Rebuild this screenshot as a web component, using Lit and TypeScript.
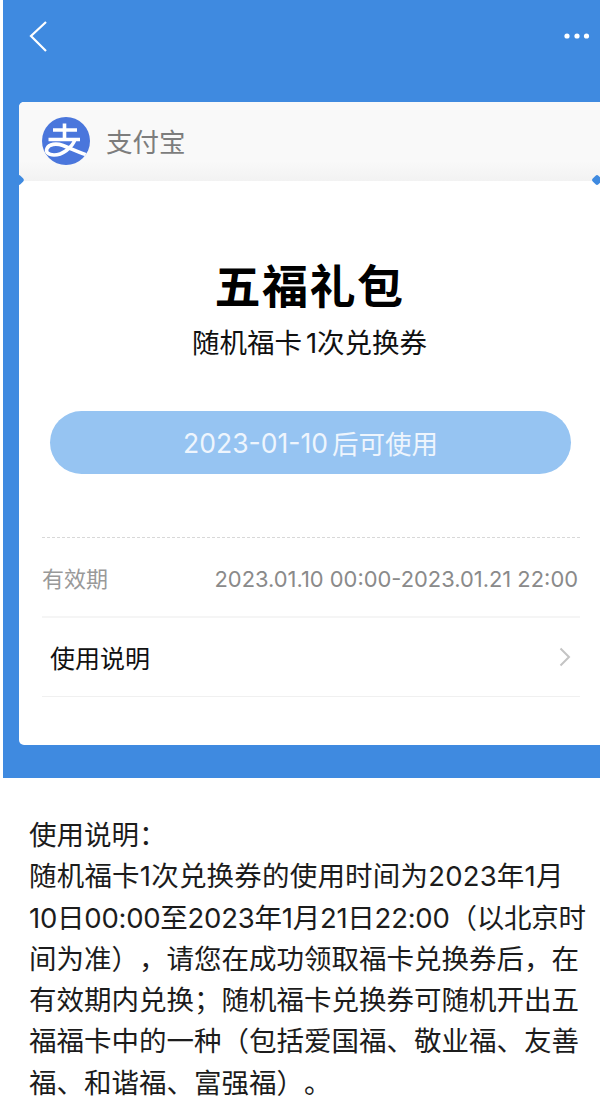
import { LitElement, html, css } from "lit";
import { customElement } from "lit/decorators.js";

const LINES: [string, string][] = [
  ["", "使用说明："],
  ["wide", "随机福卡1次兑换券的使用时间为2023年1月"],
  ["tight", "10日00:00至2023年1月21日22:00（以北京时"],
  ["", "间为准），请您在成功领取福卡兑换券后，在"],
  ["", "有效期内兑换；随机福卡兑换券可随机开出五"],
  ["", "福福卡中的一种（包括爱国福、敬业福、友善"],
  ["", "福、和谐福、富强福）。"],
];

@customElement("app-root")
export class AppRoot extends LitElement {
  static styles = css`
    :host { display: block; width: 600px; height: 1106px; overflow: hidden; background: #fff; font-family: "Inter", "Noto Sans CJK SC", sans-serif; text-spacing-trim: space-all; }
    .hero { margin-left: 3px; height: 778px; box-sizing: border-box; background: #3f8ae0; padding-top: 102px; padding-left: 16px; position: relative; }
    .nav { position: absolute; left: 0; right: 0; top: 0; height: 72px; display: flex; align-items: center; justify-content: space-between; padding: 0 10px 0 24px; }
    .nav svg { display: block; }
    .card { background: #fff; border-radius: 5px 0 0 5px; height: 643px; overflow: hidden; display: flex; flex-direction: column; }
    .brand { height: 79px; flex: none; box-sizing: border-box; background: linear-gradient(#f9f9f9 0, #f9f9f9 75%, #f2f2f2 100%); display: flex; align-items: center; gap: 16px; padding: 0 0 2px 23px; font-size: 26.5px; color: #7d7d7d; }
    .brand svg { display: block; }
    .body { flex: 1; display: flex; flex-direction: column; padding: 0 20px 0 23px; }
    h1 { margin: 77px 0 0; font-size: 46px; line-height: 56px; font-weight: 700; color: #000; text-align: center; letter-spacing: 1.5px; padding-right: 3px; }
    .sub { margin-top: 11px; font-size: 27.5px; line-height: 36px; color: #111; text-align: center; padding-right: 3px; }
    .gap { margin-left: 4px; }
    .btn { margin: 50px 9px 0 8px; height: 63px; border-radius: 32px; background: #96c4f2; color: #eef5fd; font-size: 26.5px; display: flex; align-items: center; justify-content: center; }
    .dash { margin-top: 63px; border-top: 1px dashed #d8d8d8; }
    .row { display: flex; align-items: center; justify-content: space-between; }
    .valid { height: 78px; color: #8a8a8a; border-bottom: 2px solid #f5f5f5; padding-right: 2px; }
    .valid .k { font-size: 22px; color: #999; }
    .valid .v { font-size: 21.9px; padding-top: 3px; }
    .use { height: 78px; font-size: 25px; color: #111; border-bottom: 1px solid #f0f0f0; padding: 0 9px 0 8px; }
    .use svg { display: block; }
    .notes { padding: 37px 0 0 29px; font-size: 27.5px; line-height: 41.3px; color: #1c1c1c; }
    .notes div { white-space: nowrap; }
    .notes .wide { letter-spacing: 0.2px; }
    .notes .tight { letter-spacing: -0.25px; }
    .notch { position: absolute; width: 8px; height: 8px; background: #3f8ae0; transform: rotate(45deg); top: 176px; border-radius: 2px; }
    .n1 { left: 12px; }
    .n2 { right: -1px; }
  `;

  render() {
    return html`
      <div class="hero">
        <div class="nav">
          <svg width="22" height="32" viewBox="0 0 22 32" fill="none" stroke="#fff" stroke-width="2.2"><path d="M19 2 L4 16 L19 31" /></svg>
          <svg width="26" height="6" viewBox="0 0 26 6" fill="#fff"><circle cx="3" cy="3" r="2.6"/><circle cx="13" cy="3" r="2.6"/><circle cx="22.5" cy="3" r="2.6"/></svg>
        </div>
        <div class="card">
          <div class="brand">
            <svg width="48" height="48" viewBox="0 0 48 48">
              <defs><clipPath id="c"><circle cx="24" cy="24" r="24"/></clipPath></defs>
              <circle cx="24" cy="24" r="24" fill="#4a76dc"/>
              <g fill="none" stroke="#fff" stroke-width="3.6" clip-path="url(#c)">
                <path d="M11 13 H35" />
                <path d="M22.5 6.5 V22" />
                <path d="M6.5 22.5 H38" />
                <path d="M33 22.5 C30 31 20 38 12 38 C6 38 3.5 35 5 31.5 C7 27 14 26 21 28.5 C30 32 38 36 48 39" />
              </g>
            </svg>
            <span>支付宝</span>
          </div>
          <div class="body">
            <h1>五福礼包</h1>
            <div class="sub">随机福卡<span class="gap">1</span>次兑换券</div>
            <div class="btn">2023-01-10<span class="gap">后可使用</span></div>
            <div class="dash"></div>
            <div class="row valid"><span class="k">有效期</span><span class="v">2023.01.10 00:00-2023.01.21 22:00</span></div>
            <div class="row use"><span>使用说明</span>
              <svg width="12" height="20" viewBox="0 0 12 20" fill="none" stroke="#c4c4c4" stroke-width="2"><path d="M1.5 1.5 L10 10 L1.5 18.5"/></svg>
            </div>
          </div>
        </div>
        <div class="notch n1"></div>
        <div class="notch n2"></div>
      </div>
      <div class="notes">${LINES.map(([c, l]) => html`<div class=${c}>${l}</div>`)}</div>
    `;
  }
}
